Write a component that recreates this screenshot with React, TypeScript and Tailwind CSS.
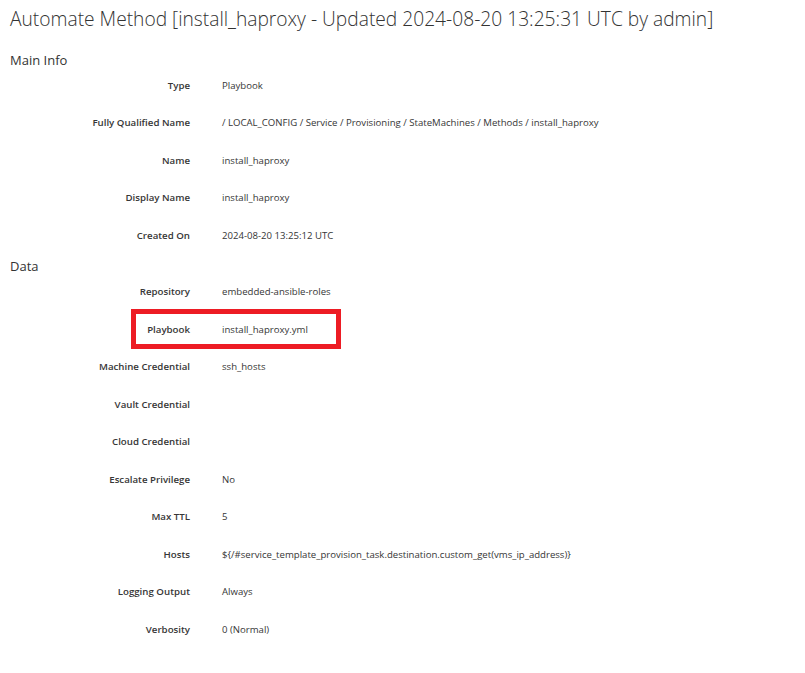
import React from 'react';

interface Field {
  label: string;
  value: string;
  highlight?: boolean;
}

const mainInfo: Field[] = [
  { label: 'Type', value: 'Playbook' },
  { label: 'Fully Qualified Name', value: '/ LOCAL_CONFIG / Service / Provisioning / StateMachines / Methods / install_haproxy' },
  { label: 'Name', value: 'install_haproxy' },
  { label: 'Display Name', value: 'install_haproxy' },
  { label: 'Created On', value: '2024-08-20 13:25:12 UTC' },
];

const data: Field[] = [
  { label: 'Repository', value: 'embedded-ansible-roles' },
  { label: 'Playbook', value: 'install_haproxy.yml', highlight: true },
  { label: 'Machine Credential', value: 'ssh_hosts' },
  { label: 'Vault Credential', value: '' },
  { label: 'Cloud Credential', value: '' },
  { label: 'Escalate Privilege', value: 'No' },
  { label: 'Max TTL', value: '5' },
  { label: 'Hosts', value: '${/#service_template_provision_task.destination.custom_get(vms_ip_address)}' },
  { label: 'Logging Output', value: 'Always' },
  { label: 'Verbosity', value: '0 (Normal)' },
];

function Row({ field }: { field: Field }) {
  return (
    <div className="relative flex items-center h-[37.5px]">
      <div className="w-[190px] shrink-0 text-right text-[9.7px] font-semibold leading-[15px] text-[#363636]">
        {field.label}
      </div>
      <div className="ml-[32px] text-[9.6px] leading-[15px] text-[#363636]">{field.value}</div>
      {field.highlight && (
        <div className="absolute left-[131px] top-[-2px] w-[210px] h-[40px] border-[5px] border-[#ed1c24]" />
      )}
    </div>
  );
}

export default function App() {
  return (
    <div className="min-h-[673px] bg-white text-[#333]" style={{ fontFamily: '"Open Sans", "Liberation Sans", sans-serif' }}>
      <h1 className="pl-[10px] pt-[7px] text-[19.2px] leading-[24px] font-light whitespace-nowrap">
        Automate Method [install_haproxy - Updated 2024-08-20 13:25:31 UTC by admin]
      </h1>

      <h3 className="pl-[10px] mt-[22.5px] text-[13px] leading-[13px]">Main Info</h3>
      <div>
        {mainInfo.map((f) => (
          <Row key={f.label} field={f} />
        ))}
      </div>

      <h3 className="pl-[10px] mt-[5.5px] text-[13px] leading-[13px]">Data</h3>
      <div className="pt-[0.5px]">
        {data.map((f) => (
          <Row key={f.label} field={f} />
        ))}
      </div>
    </div>
  );
}
